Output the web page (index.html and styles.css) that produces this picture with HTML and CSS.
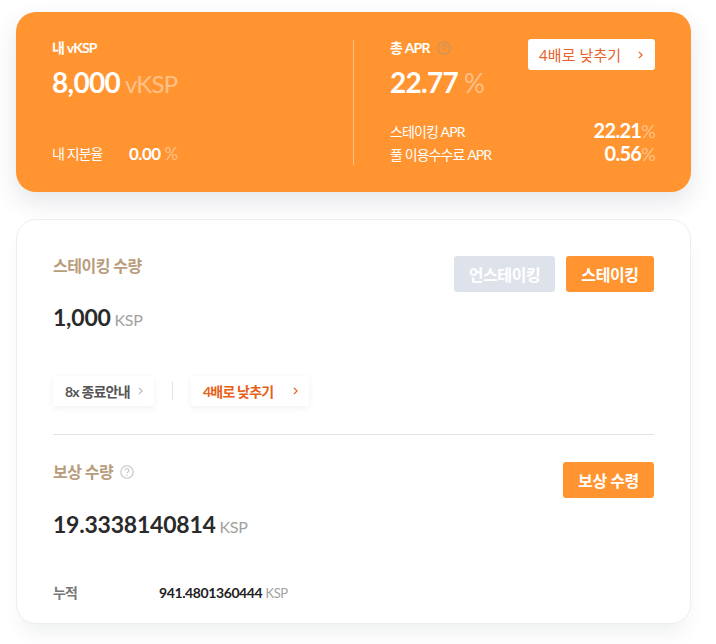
FILE: index.html
```html
<!DOCTYPE html>
<html lang="ko">
<head>
<meta charset="utf-8">
<title>vKSP</title>
<link rel="stylesheet" href="styles.css">
</head>
<body>
<main class="page">
  <section class="hero">
    <div class="hero-left">
      <div>
        <div class="hero-label">내 vKSP</div>
        <div class="hero-value"><b>8,000</b> <span>vKSP</span></div>
      </div>
      <div class="share">
        <span class="share-label">내 지분율</span>
        <span class="share-value"><b>0.00</b> <span>%</span></span>
      </div>
    </div>
    <div class="hero-right">
      <div class="apr-top">
        <div>
          <div class="hero-label apr-label">총 APR
            <svg class="help help-light" viewBox="0 0 14 14"><circle cx="7" cy="7" r="6.2"/><path d="M5.1 5.5a1.9 1.9 0 1 1 2.9 1.6c-.7.4-1 .8-1 1.5"/><path d="M7 10v.9"/></svg>
          </div>
          <div class="hero-value hero-value-apr"><b>22.77</b> <span>%</span></div>
        </div>
        <button class="lower-white">4배로 낮추기
          <svg class="chev" viewBox="0 0 6 10"><path d="M1 1l4 4-4 4"/></svg>
        </button>
      </div>
      <div class="apr-rows">
        <div class="apr-row"><span>스테이킹 APR</span><span class="apr-num"><b>22.21</b><i>%</i></span></div>
        <div class="apr-row"><span>풀 이용수수료 APR</span><span class="apr-num"><b>0.56</b><i>%</i></span></div>
      </div>
    </div>
  </section>

  <section class="panel">
    <div class="block block-stake">
      <div class="block-head">
        <div class="title">스테이킹 수량</div>
        <div class="actions">
          <button class="btn btn-off">언스테이킹</button>
          <button class="btn btn-on">스테이킹</button>
        </div>
      </div>
      <div class="amount"><b>1,000</b> <span>KSP</span></div>
      <div class="chips">
        <button class="chip chip-dark">8x 종료안내
          <svg class="chev" viewBox="0 0 6 10"><path d="M1 1l4 4-4 4"/></svg>
        </button>
        <span class="chip-sep"></span>
        <button class="chip chip-orange">4배로 낮추기
          <svg class="chev" viewBox="0 0 6 10"><path d="M1 1l4 4-4 4"/></svg>
        </button>
      </div>
    </div>
    <div class="block block-reward">
      <div class="block-head">
        <div class="title">보상 수량
          <svg class="help help-grey" viewBox="0 0 14 14"><circle cx="7" cy="7" r="6.2"/><path d="M5.1 5.5a1.9 1.9 0 1 1 2.9 1.6c-.7.4-1 .8-1 1.5"/><path d="M7 10v.9"/></svg>
        </div>
        <button class="btn btn-on btn-claim">보상 수령</button>
      </div>
      <div class="amount amount-reward"><b>19.3338140814</b> <span>KSP</span></div>
      <div class="total">
        <span class="total-label">누적</span>
        <span class="total-value"><b>941.4801360444</b> <span>KSP</span></span>
      </div>
    </div>
  </section>
</main>
</body>
</html>
```

FILE: styles.css
```css
* { box-sizing: border-box; }
html, body { margin: 0; background: #fff; overflow: hidden; }
body { font-family: Lato, "Noto Sans CJK KR", sans-serif; height: 644px; }
button { font-family: inherit; border: 0; padding: 0; cursor: pointer; }
.page { width: 675px; margin: 12px 0 0 16px; display: flex; flex-direction: column; gap: 27px; }

.hero { height: 180px; background: #ff9431; border-radius: 20px; color: #fff; display: flex; padding: 28px 36px 27px 36px; box-shadow: 0 10px 24px rgba(40, 50, 70, .12); }
.hero-left { width: 302px; border-right: 1px solid rgba(255, 255, 255, .4); display: flex; flex-direction: column; justify-content: space-between; }
.hero-right { flex: 1; padding-left: 36px; display: flex; flex-direction: column; justify-content: space-between; }
.hero-label { font-size: 14px; line-height: 16px; font-weight: 700; letter-spacing: -.8px; display: flex; align-items: center; gap: 7px; }
.hero-value { margin-top: 9px; font-size: 24px; line-height: 34px; letter-spacing: -.7px; }
.hero-value b { font-size: 28px; font-weight: 700; letter-spacing: -.7px; }
.hero-value span { opacity: .42; }
.hero-value-apr { font-size: 26px; }
.share { display: flex; align-items: center; gap: 26px; font-size: 14px; line-height: 18px; padding-bottom: 2px; }
.share-label { letter-spacing: -.9px; width: 51px; white-space: nowrap; }
.share-value { font-size: 17px; letter-spacing: -.5px; }
.share-value b { font-weight: 700; }
.share-value span { opacity: .42; }

.apr-top { display: flex; justify-content: space-between; align-items: flex-start; }
.lower-white { width: 127px; height: 31px; margin-top: -1px; background: #fff; border-radius: 3px; color: #e8612c; font-size: 15px; letter-spacing: .1px; display: flex; align-items: center; justify-content: space-between; padding: 0 12px 0 11px; }
.apr-rows { display: flex; flex-direction: column; gap: 3px; padding-bottom: 1px; }
.apr-row { display: flex; justify-content: space-between; align-items: center; font-size: 14px; line-height: 19px; letter-spacing: -.9px; }
.apr-num { font-size: 20px; letter-spacing: -.7px; }
.apr-num b { font-weight: 700; }
.apr-num i { font-style: normal; font-size: 18px; opacity: .42; }

.chev { width: 5px; height: 8px; fill: none; stroke: currentColor; stroke-width: 1.5; }
.help { width: 14px; height: 14px; fill: none; stroke-width: 1.1; }
.help-light { stroke: rgba(150, 150, 150, .6); }
.help-grey { stroke: #c4c4c4; }

.panel { height: 405px; border: 1px solid #eceef1; border-radius: 20px; background: #fff; padding: 0 36px; box-shadow: 0 14px 20px -6px rgba(40, 50, 70, .08); }
.block-head { display: flex; justify-content: space-between; align-items: flex-start; }
.block-stake { height: 215px; padding-top: 36px; border-bottom: 1px solid #dfe3e8; }
.block-reward { padding-top: 27px; }
.title { font-size: 16px; line-height: 22px; font-weight: 700; color: #b89c7c; letter-spacing: -.5px; display: flex; align-items: center; gap: 7px; margin-top: -1px; }
.btn { height: 36px; border-radius: 3px; color: #fff; font-size: 16px; font-weight: 700; letter-spacing: -.4px; }
.actions { display: flex; gap: 11px; }
.btn-off { width: 101px; background: #dee3eb; }
.btn-on { width: 88px; background: #ff9431; }
.btn-claim { width: 91px; }
.amount { font-size: 16px; line-height: 30px; color: #a1a1a1; letter-spacing: -.3px; }
.amount b { font-size: 23px; font-weight: 700; color: #2a2a2a; letter-spacing: -.22px; }
.block-stake .amount { margin-top: 10px; }
.amount-reward { margin-top: 11px; }
.chips { display: flex; align-items: center; margin-top: 41px; }
.chip { height: 30px; background: #fff; border-radius: 3px; box-shadow: 0 2px 6px rgba(50, 60, 80, .07); font-size: 14px; font-weight: 700; letter-spacing: -.8px; display: flex; align-items: center; }
.chip-dark { width: 101px; padding: 0 11px 0 12px; justify-content: space-between; color: #555; }
.chip-dark .chev { color: #bbb; }
.chip-orange { width: 118px; padding: 0 11px 0 12px; justify-content: space-between; color: #e8611a; }
.chip-sep { width: 1px; height: 18px; background: #dfe3e8; margin: 0 18px; }
.total { display: flex; align-items: center; margin-top: 41px; font-size: 13px; line-height: 20px; }
.total-label { width: 106px; color: #777; font-weight: 700; font-size: 14px; letter-spacing: -.8px; }
.total-value { color: #a1a1a1; letter-spacing: -.4px; font-size: 14px; }
.total-value b { color: #222; font-weight: 700; }
.total-value span { font-size: 13px; }
```
